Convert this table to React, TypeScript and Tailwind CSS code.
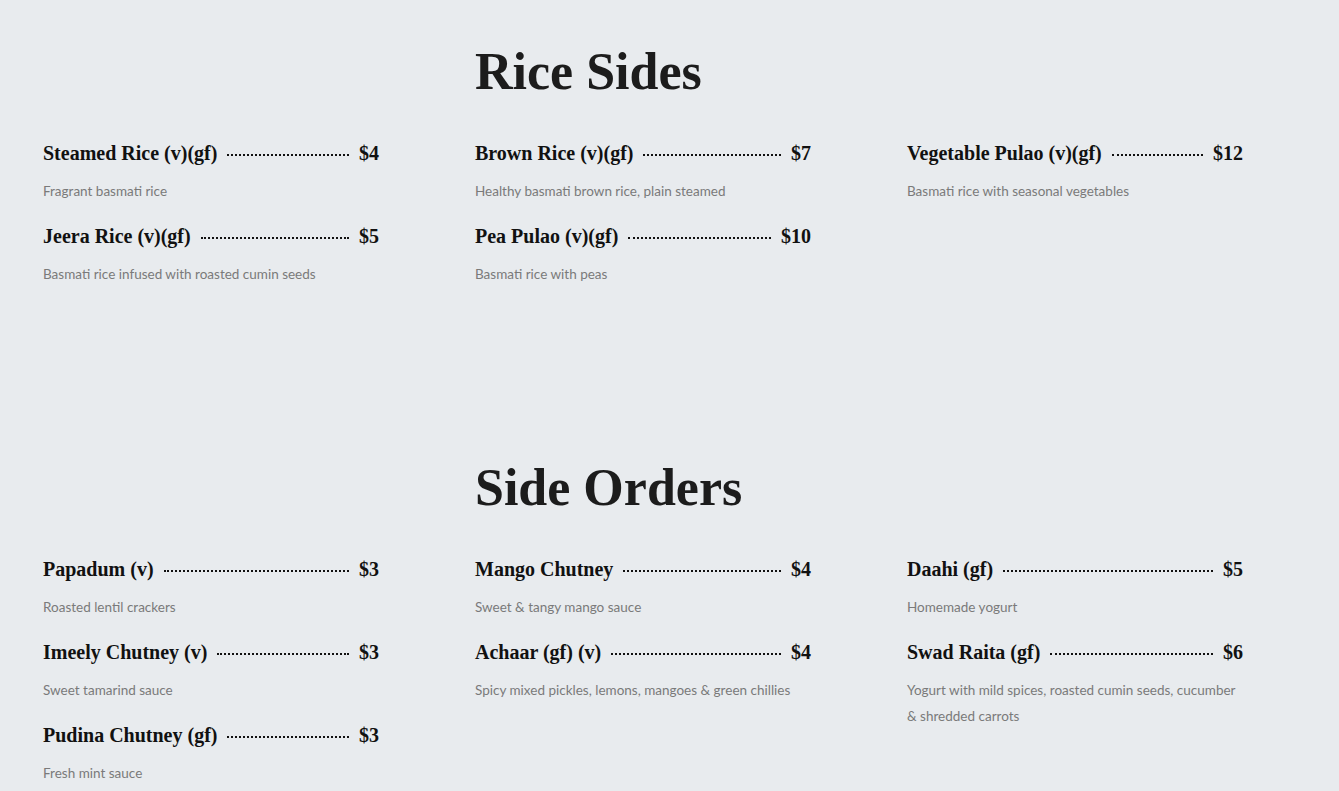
import React from "react";

type Item = { name: string; price: string; desc: string };

const rice: Item[][] = [
  [
    { name: "Steamed Rice (v)(gf)", price: "$4", desc: "Fragrant basmati rice" },
    { name: "Jeera Rice (v)(gf)", price: "$5", desc: "Basmati rice infused with roasted cumin seeds" },
  ],
  [
    { name: "Brown Rice (v)(gf)", price: "$7", desc: "Healthy basmati brown rice, plain steamed" },
    { name: "Pea Pulao (v)(gf)", price: "$10", desc: "Basmati rice with peas" },
  ],
  [{ name: "Vegetable Pulao (v)(gf)", price: "$12", desc: "Basmati rice with seasonal vegetables" }],
];

const sides: Item[][] = [
  [
    { name: "Papadum (v)", price: "$3", desc: "Roasted lentil crackers" },
    { name: "Imeely Chutney (v)", price: "$3", desc: "Sweet tamarind sauce" },
    { name: "Pudina Chutney (gf)", price: "$3", desc: "Fresh mint sauce" },
  ],
  [
    { name: "Mango Chutney", price: "$4", desc: "Sweet & tangy mango sauce" },
    { name: "Achaar (gf) (v)", price: "$4", desc: "Spicy mixed pickles, lemons, mangoes & green chillies" },
  ],
  [
    { name: "Daahi (gf)", price: "$5", desc: "Homemade yogurt" },
    {
      name: "Swad Raita (gf)",
      price: "$6",
      desc: "Yogurt with mild spices, roasted cumin seeds, cucumber & shredded carrots",
    },
  ],
];

function MenuItem({ item }: { item: Item }) {
  return (
    <div className="mb-[17px]">
      <div className="flex h-[30px] items-center font-['Liberation_Serif',serif] text-[20px] font-bold leading-[30px] text-[#111]">
        <span className="whitespace-nowrap">{item.name}</span>
        <div className="mx-[10px] mt-[4px] flex-1 border-b-2 border-dotted border-[#111]" />
        <span className="whitespace-nowrap">{item.price}</span>
      </div>
      <p className="mt-[10px] font-['Lato',sans-serif] text-[13.5px] leading-[26px] text-[#7a7a7a]">{item.desc}</p>
    </div>
  );
}

function Section({ title, cols }: { title: string; cols: Item[][] }) {
  return (
    <section className="pt-[41px] pb-[112px]">
      <div className="grid grid-cols-[432px_432px_432px] pl-[43px]">
        <h2 className="col-start-2 mb-[35px] font-['Liberation_Serif',serif] text-[52px] font-bold leading-[62px] text-[#1c1c1c]">
          {title}
        </h2>
      </div>
      <div className="grid grid-cols-[432px_432px_432px] pl-[43px]">
        {cols.map((col, i) => (
          <div key={i} className="pr-[96px]">
            {col.map((it) => (
              <MenuItem key={it.name} item={it} />
            ))}
          </div>
        ))}
      </div>
    </section>
  );
}

export default function App() {
  return (
    <div className="min-h-screen w-full bg-[#e8ebee]">
      <Section title="Rice Sides" cols={rice} />
      <Section title="Side Orders" cols={sides} />
    </div>
  );
}
